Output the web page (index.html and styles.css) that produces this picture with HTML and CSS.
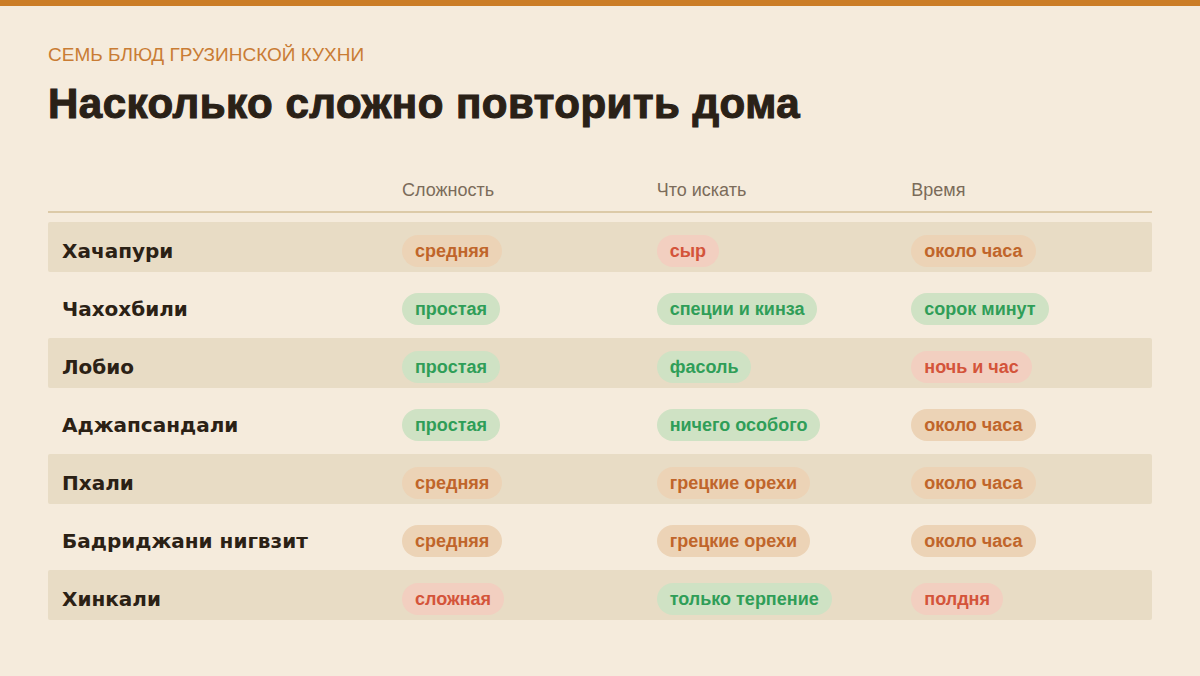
FILE: index.html
```html
<!DOCTYPE html>
<html lang="ru">
<head>
<meta charset="utf-8">
<link rel="stylesheet" href="styles.css">
</head>
<body>
<div class="topbar"></div>
<main class="page">
  <div class="eyebrow">СЕМЬ БЛЮД ГРУЗИНСКОЙ КУХНИ</div>
  <h1 class="title">Насколько сложно повторить дома</h1>
  <div class="table">
    <div class="row head">
      <div class="cell"></div>
      <div class="cell">Сложность</div>
      <div class="cell">Что искать</div>
      <div class="cell">Время</div>
    </div>
    <div class="row stripe">
      <div class="cell name">Хачапури</div>
      <div class="cell"><span class="pill mid">средняя</span></div>
      <div class="cell"><span class="pill hard">сыр</span></div>
      <div class="cell"><span class="pill mid">около часа</span></div>
    </div>
    <div class="row">
      <div class="cell name">Чахохбили</div>
      <div class="cell"><span class="pill easy">простая</span></div>
      <div class="cell"><span class="pill easy">специи и кинза</span></div>
      <div class="cell"><span class="pill easy">сорок минут</span></div>
    </div>
    <div class="row stripe">
      <div class="cell name">Лобио</div>
      <div class="cell"><span class="pill easy">простая</span></div>
      <div class="cell"><span class="pill easy">фасоль</span></div>
      <div class="cell"><span class="pill hard">ночь и час</span></div>
    </div>
    <div class="row">
      <div class="cell name">Аджапсандали</div>
      <div class="cell"><span class="pill easy">простая</span></div>
      <div class="cell"><span class="pill easy">ничего особого</span></div>
      <div class="cell"><span class="pill mid">около часа</span></div>
    </div>
    <div class="row stripe">
      <div class="cell name">Пхали</div>
      <div class="cell"><span class="pill mid">средняя</span></div>
      <div class="cell"><span class="pill mid">грецкие орехи</span></div>
      <div class="cell"><span class="pill mid">около часа</span></div>
    </div>
    <div class="row">
      <div class="cell name">Бадриджани нигвзит</div>
      <div class="cell"><span class="pill mid">средняя</span></div>
      <div class="cell"><span class="pill mid">грецкие орехи</span></div>
      <div class="cell"><span class="pill mid">около часа</span></div>
    </div>
    <div class="row stripe">
      <div class="cell name">Хинкали</div>
      <div class="cell"><span class="pill hard">сложная</span></div>
      <div class="cell"><span class="pill easy">только терпение</span></div>
      <div class="cell"><span class="pill hard">полдня</span></div>
    </div>
  </div>
</main>
</body>
</html>
```
FILE: styles.css
```css
html, body {
  margin: 0;
  padding: 0;
}
body {
  background: #f5ebdc;
  font-family: "Liberation Sans", Arial, sans-serif;
  color: #2b2115;
  width: 1200px;
  height: 676px;
  overflow: hidden;
}
.topbar {
  height: 6px;
  background: #cb7d27;
}
.page {
  padding: 38px 48px 0;
}
.eyebrow {
  font-size: 19px;
  line-height: 22px;
  color: #c97c34;
}
.title {
  margin: 13px 0 0;
  font-family: "Liberation Sans", Arial, sans-serif;
  font-size: 42px;
  line-height: 50px;
  font-weight: 700;
  color: #2a2117;
  letter-spacing: 0.5px;
  -webkit-text-stroke: 1.1px #2a2117;
}
.table {
  margin-top: 50px;
  display: flex;
  flex-direction: column;
  gap: 8px;
}
.row {
  display: grid;
  grid-template-columns: 340px 1fr 1fr 1fr;
  height: 50px;
  padding: 13px 0 5px;
  box-sizing: border-box;
  align-items: center;
  border-radius: 2px;
}
.row.head {
  height: auto;
  padding: 0 0 10px;
  margin-bottom: 1px;
  border-bottom: 2px solid #dccaa8;
  border-radius: 0;
  color: #7b6b5a;
  font-size: 18px;
  line-height: 22px;
}
.row.stripe {
  background: #e8dcc5;
}
.cell {
  padding-left: 14px;
}
.name {
  font-family: "DejaVu Sans", "Liberation Sans", sans-serif;
  font-size: 20px;
  font-weight: 700;
  color: #2b2115;
}
.pill {
  display: inline-block;
  padding: 6px 13px;
  border-radius: 17px;
  font-size: 18px;
  line-height: 20px;
  font-weight: 700;
}
.pill.mid {
  background: #ecd3b6;
  color: #c0652a;
}
.pill.hard {
  background: #f2cfc0;
  color: #d4543a;
}
.pill.easy {
  background: #cfe2c4;
  color: #2f9e58;
}
```
